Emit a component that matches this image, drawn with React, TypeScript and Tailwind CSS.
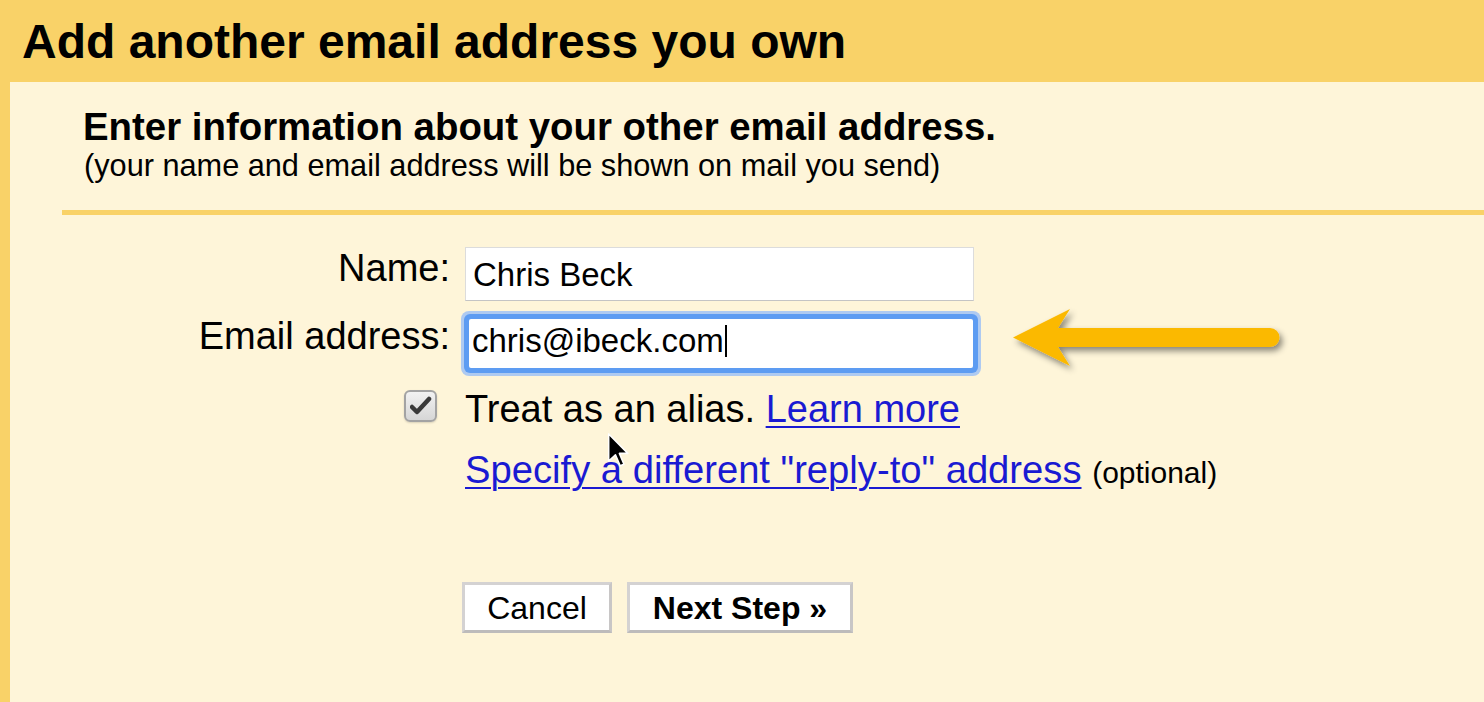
import React from "react";

export default function App() {
  return (
    <div className="relative h-[702px] w-[1484px] overflow-hidden bg-[#FEF5D9] font-['Liberation_Sans',Arial,sans-serif] text-black">
      <div className="h-[82px] bg-[#F9D268] pl-[22px] pt-[18px]">
        <h1 className="text-[48px] font-bold leading-none whitespace-nowrap">Add another email address you own</h1>
      </div>
      <div className="flex h-[620px]">
        <div className="w-[10px] bg-[#F9D268]" />
        <div className="flex-1 pt-[26px]">
          <div className="pl-[73px] text-[38.4px] font-bold leading-none whitespace-nowrap">
            Enter information about your other email address.
          </div>
          <div className="mt-[5px] pl-[74px] text-[30.7px] leading-none whitespace-nowrap">
            (your name and email address will be shown on mail you send)
          </div>
          <div className="ml-[52px] mt-[28px] h-[5px] bg-[#F9D268]" />

          {/* Name row */}
          <div className="mt-[32px] flex">
            <div className="w-[440px] pt-[2px] text-right text-[38px] leading-none">Name:</div>
            <div className="ml-[15px] h-[54px] w-[509px] border border-[#dcdcdc] border-b-[#c4c4c4] bg-white pl-[7px] pt-[10px] text-[33px] leading-none">
              Chris Beck
            </div>
          </div>

          {/* Email row */}
          <div className="mt-[10px] flex">
            <div className="w-[440px] pt-[6px] text-right text-[38px] leading-none">Email address:</div>
            <div className="ml-[11px] h-[65px] w-[520px] rounded-[8px] bg-[#aecaf1] p-[3px]">
              <div className="h-full rounded-[6px] bg-[#5d9cf2] p-[5px]">
                <div className="flex h-full items-start rounded-[2px] bg-white pl-[3px] pt-[5px] text-[33px] leading-none">
                  <span>chris@ibeck.com</span>
                  <span className="ml-[1px] mt-[1px] inline-block h-[32px] w-[2px] bg-black" />
                </div>
              </div>
            </div>
          </div>

          {/* Alias row */}
          <div className="mt-[14px] flex">
            <div className="flex w-[440px] justify-end pr-[13px]">
              <div className="flex h-[32px] w-[33px] items-center justify-center rounded-[6px] border-2 border-[#a3a3a3] bg-gradient-to-b from-[#f2f2f2] to-[#d6d6d6] shadow-[0_1px_2px_rgba(0,0,0,0.15)]">
                <svg width="22" height="20" viewBox="0 0 22 20">
                  <path d="M2 11 L7 16 L19 3" fill="none" stroke="#3a3a3a" strokeWidth="4.5" strokeLinecap="round" strokeLinejoin="round" />
                </svg>
              </div>
            </div>
            <div className="ml-[15px] whitespace-nowrap text-[38px] leading-none">
              Treat as an alias.{" "}
              <a className="text-[#1a1ad2] underline decoration-[2px] underline-offset-[4px]">Learn more</a>
            </div>
          </div>

          {/* Reply-to row */}
          <div className="mt-[23px] flex">
            <div className="w-[440px]" />
            <div className="ml-[15px] whitespace-nowrap text-[38.2px] leading-none">
              <a className="text-[#1a1ad2] underline decoration-[2px] underline-offset-[4px]">
                Specify a different "reply-to" address
              </a>{" "}
              <span className="text-[30px]">(optional)</span>
            </div>
          </div>

          {/* Buttons row */}
          <div className="mt-[93px] flex">
            <div className="w-[440px]" />
            <div className="ml-[12px] flex gap-[15px]">
              <button className="flex h-[51px] w-[150px] items-center justify-center border-[3px] border-[#d4d2d2] border-b-[#bdbbbb] border-r-[#c8c6c6] bg-white text-[32px] leading-none">
                Cancel
              </button>
              <button className="flex h-[51px] w-[226px] items-center justify-center border-[3px] border-[#d4d2d2] border-b-[#bdbbbb] border-r-[#c8c6c6] bg-white text-[32px] font-bold leading-none">
                Next Step »
              </button>
            </div>
          </div>
        </div>
      </div>

      {/* Annotation arrow */}
      <svg className="absolute left-[1000px] top-[295px]" width="300" height="90" viewBox="0 0 300 90">
        <defs>
          <filter id="sh" x="-20%" y="-40%" width="140%" height="180%">
            <feDropShadow dx="3" dy="4" stdDeviation="3" floodColor="#000" floodOpacity="0.45" />
          </filter>
        </defs>
        <path
          d="M13 42.5 L70 14 L58 33 L270 33 A9.5 9.5 0 0 1 270 52 L58 52 L70 71 Z"
          fill="#FBB903"
          filter="url(#sh)"
        />
      </svg>

      {/* Mouse cursor */}
      <svg className="absolute left-[607px] top-[432px]" width="22" height="36" viewBox="-1 -1 13 21">
        <path d="M0 0 L0 16 L4 12.3 L6.8 18.8 L9 17.9 L6.3 11.5 L11.3 11.5 Z" fill="#000" stroke="#fff" strokeWidth="0.9" strokeLinejoin="round" />
      </svg>
    </div>
  );
}
